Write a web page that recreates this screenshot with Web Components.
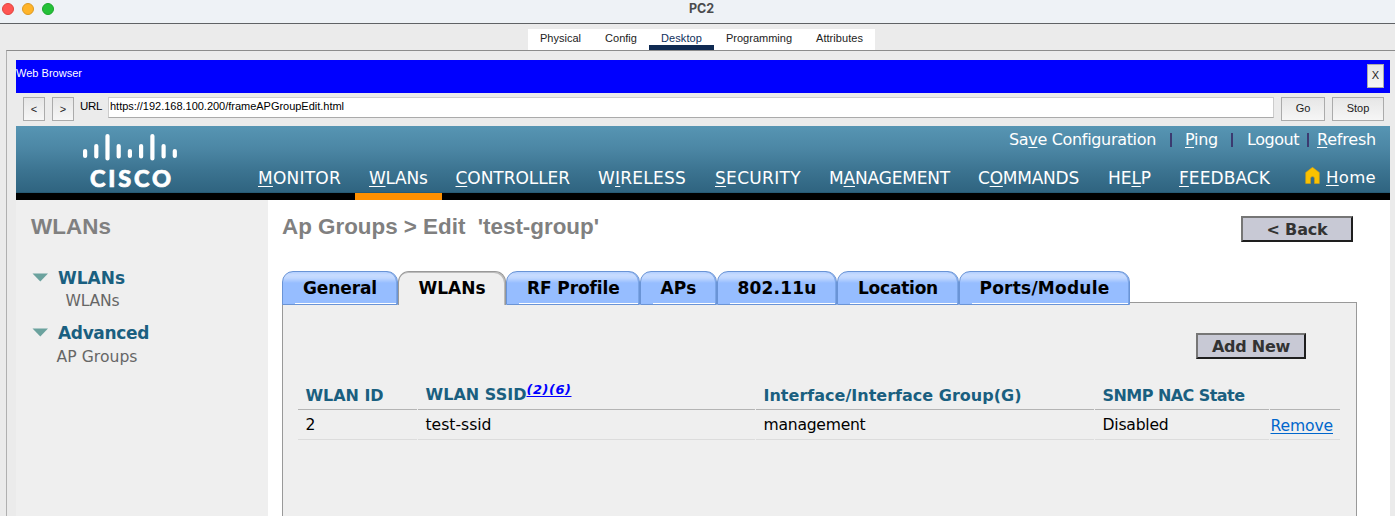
<!DOCTYPE html>
<html lang="en">
<head>
<meta charset="utf-8">
<title>PC2</title>
<style>
html,body{margin:0;height:100%;overflow:hidden;background:#ebebeb}
body{font-family:"Liberation Sans",Arial,sans-serif;font-size:11px;color:#000}
</style>
</head>
<body>
<pc-window></pc-window>
<script>
const define = (name, html, setup) => customElements.define(name, class extends HTMLElement {
  connectedCallback() {
    if (this.shadowRoot) return;
    const t = document.createElement('template');
    t.innerHTML = html;
    this.attachShadow({mode: 'open'}).append(t.content.cloneNode(true));
    if (setup) setup.call(this, this.shadowRoot);
  }
});

// Text run tracked to occupy the width given in its "w" attribute.
define('fit-text', `<style>
:host{display:inline-block;white-space:pre;flex:none;text-underline-offset:2px}
span{display:inline-block}
</style><span><slot></slot></span>`, function (root) {
  const s = root.querySelector('span'), w = +this.getAttribute('w');
  if (!w) return;
  this.style.width = w + 'px';
  const natural = s.getBoundingClientRect().width;
  s.style.letterSpacing = (w - natural) / this.textContent.length + 'px';
});

define('title-bar', `<style>
:host{display:flex;height:23px;background:#eef2f6;border-bottom:1px solid #5f6265;align-items:flex-start}
.dots{display:flex;gap:8px;padding:3px 0 0 2px;width:687px;box-sizing:border-box}
i{width:12px;height:12px;border-radius:50%;box-sizing:border-box;border:1px solid #e0443e;background:#ff5552}
i:nth-child(2){background:#ffb429;border-color:#dc9a24}
i:nth-child(3){background:#24c138;border-color:#1ba52c}
b{font:700 12.5px/17px Inter,sans-serif;color:#4a4b4d;padding-left:2px}
</style><div class="dots"><i></i><i></i><i></i></div><b><fit-text w="26"><slot></slot></fit-text></b>`);

define('pt-tab', `<style>
:host{display:block;height:21px;box-sizing:border-box;line-height:19px;padding:0 12px;color:#222}
:host([selected]){color:#10305c;border-bottom:5px solid #0f2a52}
</style><slot></slot>`);

define('qt-button', `<style>
:host{display:block;box-sizing:border-box;height:24px;border:1px solid #ababab;outline:0;background:linear-gradient(#e6e6e6,#f6f6f6);text-align:center;line-height:21px;color:#222;flex:none}
</style><slot></slot>`);

define('browser-bar', `<style>
:host{display:block}
.t{display:flex;justify-content:space-between;background:#00f;height:33px;color:#fff;line-height:26px}
.t qt-button{margin:4px 6px 0 0;width:17px}
.u{display:flex;height:33px;padding:4px 6px 0 7px;box-sizing:border-box}
.n{margin-right:7px;width:22px}
.l{line-height:18px;width:28px;margin-left:-1px;font-size:11.5px}
.f{flex:1;height:21px;box-sizing:border-box;background:#fff;border:1px solid #ccc;border-bottom-color:#aaa;line-height:17px;padding-left:1px;margin-right:7px}
.n,.x{line-height:23px}
</style><div class="t"><fit-text w="66">Web Browser</fit-text><qt-button>X</qt-button></div>
<div class="u"><qt-button class="n x">&lt;</qt-button><qt-button class="n x">&gt;</qt-button><div class="l"><fit-text w="22">URL</fit-text></div><div class="f"><fit-text w="234">https://192.168.100.200/frameAPGroupEdit.html</fit-text></div><qt-button style="width:44px;margin-right:7px">Go</qt-button><qt-button style="width:52px">Stop</qt-button></div>`);

define('cisco-logo', `<style>
:host{display:block;width:227px;flex:none}
svg{display:block}
</style><svg width="227" height="67"><g stroke="#fff" stroke-width="4.2" stroke-linecap="round">
<path d="M69.1 25v5M80.3 20v10.500M91.5 10v22.500M102.700 20v10.500M113.900 25v5M125.100 20v10.500M136.400 10v22.500M147.600 20v10.500M158.800 25v5"/></g>
<g fill="#fff" stroke="#fff" stroke-width=".7" font-family="Lato,sans-serif" font-weight="900" font-size="23.5"><text x="74" y="60.700" textLength="81" lengthAdjust="spacing">CISCO</text></g></svg>`);

define('nav-item', `<style>
:host{display:block;height:37px;padding:0 14px;line-height:44px;flex:none}
:host([selected]){border-bottom:7px solid #ff9000;padding-bottom:0}
</style><slot></slot>`);

define('wlc-header', `<style>
:host{display:flex;height:74px;background:linear-gradient(#5795b3 0,#4c87a5 22px,#3c7491 44px,#2f6480 66px,#1f5069 67px,#000 67px);color:#fff;font-family:"DejaVu Sans",Verdana,sans-serif}
.c{flex:1;display:flex;flex-direction:column}
.top{height:30px;flex:none;display:flex;font-size:16px;line-height:28px;padding-left:766px}
.top i{width:2px;height:14px;margin-top:7px;background:#3b3a70;flex:none}
.nav{display:flex;flex:none;height:44px;font-size:17px}
svg{margin:11px 6px 0 21px;flex:none}
</style><cisco-logo></cisco-logo><div class="c">
<div class="top"><fit-text w="147">Sa<u>v</u>e Configuration</fit-text><i style="margin-left:14px"></i><fit-text w="33" style="margin-left:13px"><u>P</u>ing</fit-text><i style="margin-left:13px"></i><fit-text w="52" style="margin-left:14px">Logout</fit-text><i style="margin-left:8px"></i><fit-text w="59" style="margin-left:8px"><u>R</u>efresh</fit-text></div>
<div class="nav">
<nav-item><fit-text w="83" style="margin-left:1px"><u>M</u>ONITOR</fit-text></nav-item>
<nav-item selected><fit-text w="58.500"><u>W</u>LANs</fit-text></nav-item>
<nav-item><fit-text w="114.500"><u>C</u>ONTROLLER</fit-text></nav-item>
<nav-item><fit-text w="88">W<u>I</u>RELESS</fit-text></nav-item>
<nav-item><fit-text w="86" style="margin-left:1px"><u>S</u>ECURITY</fit-text></nav-item>
<nav-item><fit-text w="121">M<u>A</u>NAGEMENT</fit-text></nav-item>
<nav-item><fit-text w="101">C<u>O</u>MMANDS</fit-text></nav-item>
<nav-item><fit-text w="43" style="margin-left:1px">HE<u>L</u>P</fit-text></nav-item>
<nav-item><fit-text w="91"><u>F</u>EEDBACK</fit-text></nav-item>
<svg width="15" height="17" viewBox="0 0 15 17"><path d="M7.500.300 14.300 5.500V16.500H9.500V11.500Q9.500 9.500 7.500 9.500T5.500 11.500V16.500H.700V5.500Z" fill="#fbc200" stroke="#d59f13" stroke-width=".6"/></svg>
<fit-text w="50" style="line-height:44px;font-size:16.500px"><u>H</u>ome</fit-text>
</div></div>`);

define('side-group', `<style>
:host{display:block;font-size:15.600px;color:#666}
.h{display:flex;color:#1a5f80;font-weight:700;font-size:17px;line-height:24px;height:25px}
svg{margin:6px 9px 0 16px}
</style><div class="h"><svg width="17" height="11"><path d="M.5 1.500H16L8.300 9.500Z" fill="#6ba29e"/></svg><slot name="title"></slot></div><slot></slot>`);

define('wlc-sidebar', `<style>
:host{display:block;width:252px;flex:none;background:#efefef;font-family:"DejaVu Sans",Verdana,sans-serif}
h2{margin:0;padding:14px 0 0 15px;font:700 22.400px/26px "Liberation Sans",sans-serif;color:#808080;height:52px;box-sizing:content-box}
.s{display:block;line-height:20px}
</style><h2><fit-text w="80">WLANs</fit-text></h2>
<side-group style="height:55px"><fit-text slot="title" w="67">WLANs</fit-text><fit-text class="s" w="54" style="margin-left:49.500px">WLANs</fit-text></side-group>
<side-group><fit-text slot="title" w="91">Advanced</fit-text><fit-text class="s" w="81" style="margin:1px 0 0 40.500px">AP Groups</fit-text></side-group>`);

define('wlc-button', `<style>
:host{display:block;box-sizing:border-box;height:26px;border:2px solid;border-color:#767676 #1e1e1e #1e1e1e #767676;background:#c8c9d5;color:#333;font-weight:700;font-size:16px;line-height:23px;text-align:center}
</style><slot></slot>`);

define('wlc-tab', `<style>
:host{display:block;box-sizing:border-box;height:34px;flex:none;border:1px solid #6a94d6;border-width:1.500px 1px 1px;border-radius:11px 11px 0 0;text-align:center;line-height:32px;
background:linear-gradient(#fff,#fff) no-repeat 12px 31px/100% 1px,linear-gradient(#b3cfff 0,#c8dcff 3px,#c0d7ff 6px,#96bdff 11px);box-shadow:inset -1px 0 #7ba5e6}
:host([selected]){background:#efefef;border-color:#999;border-bottom:0;box-shadow:inset -1px 1px #bbb}
</style><slot></slot>`);

define('wlan-table', `<style>
:host{display:grid;grid-template-columns:119px 337px 338px 174px 70px;column-gap:1px;margin:22px 16px 0 15px;font-size:15.600px}
div{box-sizing:border-box;padding-left:7.500px;height:30px;line-height:31px;border-bottom:1px solid #dcdcdc}
.h{color:#1a5f80;font-weight:700;font-size:16px;line-height:30px;height:29px;border-color:#b4b4b4}
.h.up{line-height:28px}
sup{font-size:13px;font-style:italic;color:#00f;line-height:0;vertical-align:6px}
.r{padding-left:.500px;line-height:32px;color:#06c}
</style>
<div class="h"><fit-text w="78">WLAN ID</fit-text></div><div class="h up"><fit-text w="101">WLAN SSID</fit-text><sup><fit-text w="45"><u>(2)(6)</u></fit-text></sup></div><div class="h"><fit-text w="258">Interface/Interface Group(G)</fit-text></div><div class="h"><fit-text w="142">SNMP NAC State</fit-text></div><div class="h"></div>
<div>2</div><div><fit-text w="66">test-ssid</fit-text></div><div><fit-text w="102">management</fit-text></div><div><fit-text w="66">Disabled</fit-text></div><div class="r"><fit-text w="62.500"><u>Remove</u></fit-text></div>`);

define('wlc-main', `<style>
:host{display:block;flex:1;background:#fff;padding:0 33px 0 14px;font-family:"DejaVu Sans",Verdana,sans-serif}
.t{display:flex;justify-content:space-between;height:71px}
h1{margin:14px 0 0;font:700 22.400px/26px "Liberation Sans",sans-serif;color:#808080}
.t wlc-button{margin:16px 4px 0 0;width:112px}
.tabs{display:flex;position:relative;z-index:1;font-weight:700;font-size:17px}
.panel{box-sizing:border-box;margin-top:-3px;height:214px;border:1px solid #999;border-bottom:0;background:#efefef;width:1075px}
.panel wlc-button{margin:30px 0 0 913px;width:110px}
</style>
<div class="t"><h1><fit-text w="317">Ap Groups &gt; Edit  'test-group'</fit-text></h1><wlc-button><fit-text w="61">&lt; Back</fit-text></wlc-button></div>
<div class="tabs">
<wlc-tab style="width:116px"><fit-text w="74">General</fit-text></wlc-tab><wlc-tab selected style="width:108px"><fit-text w="67">WLANs</fit-text></wlc-tab><wlc-tab style="width:134px"><fit-text w="92">RF Profile</fit-text></wlc-tab><wlc-tab style="width:77px"><fit-text w="36">APs</fit-text></wlc-tab><wlc-tab style="width:120px"><fit-text w="79">802.11u</fit-text></wlc-tab><wlc-tab style="width:122px"><fit-text w="80">Location</fit-text></wlc-tab><wlc-tab style="width:171px"><fit-text w="130">Ports/Module</fit-text></wlc-tab></div>
<div class="panel"><wlc-button><fit-text w="78">Add New</fit-text></wlc-button><wlan-table></wlan-table></div>`);

define('pc-window', `<style>
:host{display:block;width:1395px;height:516px;overflow:hidden}
.tabs{display:flex;margin:5px 0 0 528px;width:347px;background:#fff}
.frame{margin-left:6px;border:solid #8c8c8c;border-width:1px 0 0 1px;border-left-color:#b0b0b0;padding:9px 5px 0 9px;height:456px}
.page{display:flex;height:316px}
</style>
<title-bar>PC2</title-bar>
<div class="tabs"><pt-tab><fit-text w="41">Physical</fit-text></pt-tab><pt-tab><fit-text w="32">Config</fit-text></pt-tab><pt-tab selected><fit-text w="41">Desktop</fit-text></pt-tab><pt-tab><fit-text w="66">Programming</fit-text></pt-tab><pt-tab><fit-text w="47">Attributes</fit-text></pt-tab></div>
<div class="frame"><browser-bar></browser-bar><wlc-header></wlc-header><div class="page"><wlc-sidebar></wlc-sidebar><wlc-main></wlc-main></div></div>`);
</script>
</body>
</html>
